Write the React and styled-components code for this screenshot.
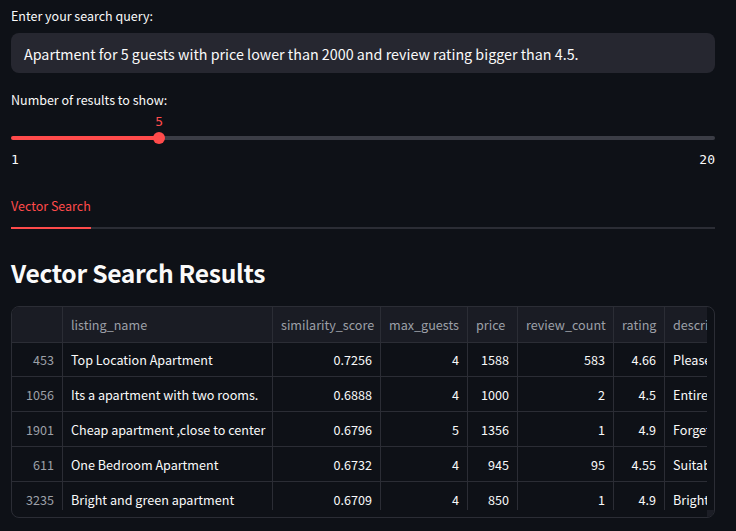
import React from "react";
import styled, { createGlobalStyle } from "styled-components";

const SANS = `"Noto Sans CJK JP", "Lato", sans-serif`;
const MONO = `"DejaVu Sans Mono", "Liberation Mono", monospace`;

const Global = createGlobalStyle`
  html, body { margin: 0; padding: 0; background: #0e1117; }
  body { color: #fafafa; font-family: ${SANS}; }
  * { box-sizing: border-box; }
`;

const Page = styled.main`
  width: 704px;
  margin-left: 11px;
  padding-top: 6px;
  display: flex;
  flex-direction: column;
`;

const FieldLabel = styled.label`
  display: block;
  font-size: 12.5px;
  line-height: 20px;
  color: #fafafa;
  margin-top: ${(p) => p.$mt || 0}px;
`;

const TextInput = styled.div`
  margin-top: 7px;
  height: 40px;
  background: #262730;
  border-radius: 8px;
  padding: 0 13px;
  display: flex;
  align-items: center;
  font-size: 14.3px;
  color: #fafafa;
  white-space: nowrap;
`;

const Slider = styled.div`
  padding-top: 22px;
`;

const Rail = styled.div`
  position: relative;
  height: 12px;
  display: flex;
  align-items: center;
`;

const Track = styled.div`
  height: 4px;
  width: 100%;
  border-radius: 2px;
  background: linear-gradient(
    to right,
    #ff4b4b 0%,
    #ff4b4b ${(p) => p.$pct}%,
    #3b3d46 ${(p) => p.$pct}%,
    #3b3d46 100%
  );
`;

const Thumb = styled.div`
  position: absolute;
  top: 0;
  width: 12px;
  height: 12px;
  margin-left: -6px;
  border-radius: 50%;
  background: #ff4b4b;
`;

const ThumbValue = styled.div`
  position: absolute;
  bottom: calc(100% + 2px);
  left: 50%;
  transform: translateX(-50%);
  font-family: ${MONO};
  font-size: 13px;
  line-height: 17px;
  color: #ff4b4b;
`;

const Ticks = styled.div`
  margin-top: 7px;
  display: flex;
  justify-content: space-between;
  font-family: ${MONO};
  font-size: 13px;
  line-height: 18px;
  color: #fafafa;
`;

const TabList = styled.div`
  margin-top: 27px;
  display: flex;
  border-bottom: 2px solid #2b2d35;
`;

const Tab = styled.div`
  font-size: 12.5px;
  line-height: 20px;
  padding-bottom: 11px;
  margin-bottom: -2px;
  color: ${(p) => (p.$active ? "#ff4b4b" : "#fafafa")};
  border-bottom: 2px solid ${(p) => (p.$active ? "#ff4b4b" : "transparent")};
`;

const Heading = styled.h3`
  margin: 25px 0 0;
  font-size: 24.6px;
  letter-spacing: -0.3px;
  line-height: 36px;
  font-weight: 700;
  color: #fafafa;
`;

const Frame = styled.div`
  margin-top: 16px;
  height: 212px;
  border: 1px solid #2b2d35;
  border-radius: 8px;
  overflow: hidden;
  display: grid;
  grid-template-columns: 1fr 7px;
  grid-template-rows: 1fr 7px;
`;

const Viewport = styled.div`
  overflow: hidden;
`;

const Corner = styled.div`
  grid-column: 2;
  grid-row: 2;
  background: #1c1e26;
`;

const Grid = styled.div`
  display: grid;
  grid-template-columns: 51px 210px 108px 87px 50px 96px 51px 160px;
  grid-auto-rows: 35px;
  width: max-content;
`;

const HeadCell = styled.div`
  height: 36px;
  background: #1a1c24;
  border-right: 1px solid #2b2d35;
  border-bottom: 1px solid #2b2d35;
  padding: 0 8px;
  display: flex;
  align-items: center;
  font-size: 12.6px;
  color: #9da0a8;
  white-space: nowrap;
  overflow: hidden;
`;

const Cell = styled.div`
  border-right: 1px solid #2b2d35;
  border-bottom: 1px solid #2b2d35;
  padding: 0 8px;
  display: flex;
  align-items: center;
  justify-content: ${(p) => (p.$num ? "flex-end" : "flex-start")};
  font-size: 12.6px;
  color: ${(p) => (p.$index ? "#9da0a8" : "#fafafa")};
  white-space: nowrap;
  overflow: hidden;
`;

const columns = [
  { key: "idx", label: "", num: true, index: true },
  { key: "name", label: "listing_name" },
  { key: "sim", label: "similarity_score", num: true },
  { key: "guests", label: "max_guests", num: true },
  { key: "price", label: "price", num: true },
  { key: "reviews", label: "review_count", num: true },
  { key: "rating", label: "rating", num: true },
  { key: "desc", label: "description" },
];

const rows = [
  { idx: "453", name: "Top Location Apartment", sim: "0.7256", guests: "4", price: "1588", reviews: "583", rating: "4.66", desc: "Please note that the apartment" },
  { idx: "1056", name: "Its a apartment with two rooms.", sim: "0.6888", guests: "4", price: "1000", reviews: "2", rating: "4.5", desc: "Entire apartment with two rooms" },
  { idx: "1901", name: "Cheap apartment ,close to center", sim: "0.6796", guests: "5", price: "1356", reviews: "1", rating: "4.9", desc: "Forget your worries in this" },
  { idx: "611", name: "One Bedroom Apartment", sim: "0.6732", guests: "4", price: "945", reviews: "95", rating: "4.55", desc: "Suitable for families" },
  { idx: "3235", name: "Bright and green apartment", sim: "0.6709", guests: "4", price: "850", reviews: "1", rating: "4.9", desc: "Bright and green apartment" },
];

const MIN = 1;
const MAX = 20;
const VALUE = 5;

export default function App() {
  const pct = ((VALUE - MIN) / (MAX - MIN)) * 100;
  return (
    <>
      <Global />
      <Page>
        <FieldLabel>Enter your search query:</FieldLabel>
        <TextInput>
          Apartment for 5 guests with price lower than 2000 and review rating bigger than 4.5.
        </TextInput>

        <FieldLabel $mt={17}>Number of results to show:</FieldLabel>
        <Slider>
          <Rail>
            <Track $pct={pct} />
            <Thumb style={{ left: `${pct}%` }}>
              <ThumbValue>{VALUE}</ThumbValue>
            </Thumb>
          </Rail>
          <Ticks>
            <span>{MIN}</span>
            <span>{MAX}</span>
          </Ticks>
        </Slider>

        <TabList>
          <Tab $active>Vector Search</Tab>
        </TabList>

        <Heading>Vector Search Results</Heading>

        <Frame>
          <Viewport>
            <Grid>
              {columns.map((c) => (
                <HeadCell key={c.key}>{c.label}</HeadCell>
              ))}
              {rows.map((r) =>
                columns.map((c) => (
                  <Cell key={r.idx + c.key} $num={c.num} $index={c.index}>
                    {r[c.key]}
                  </Cell>
                ))
              )}
            </Grid>
          </Viewport>
          <Corner />
        </Frame>
      </Page>
    </>
  );
}
